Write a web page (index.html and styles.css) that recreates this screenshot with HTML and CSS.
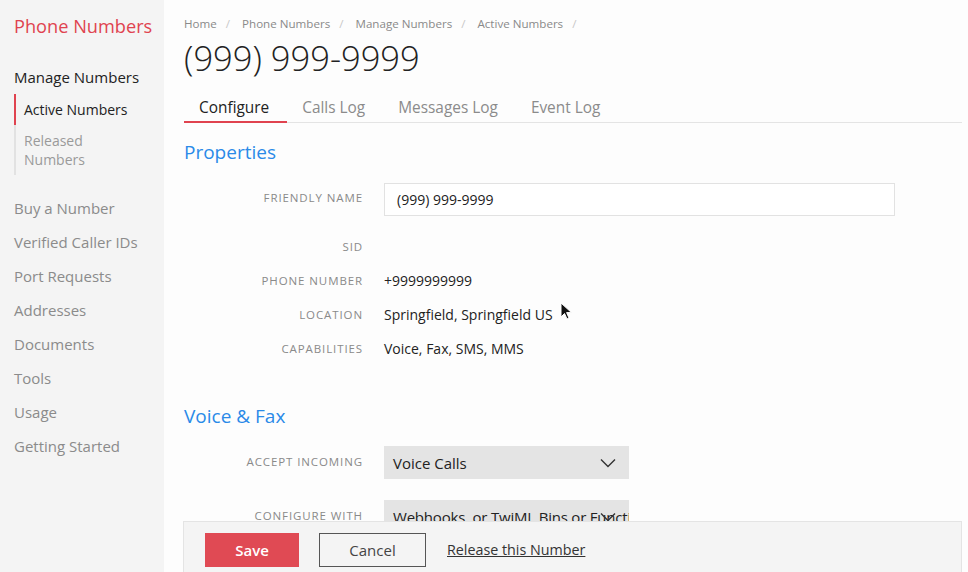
FILE: index.html
```html
<!DOCTYPE html>
<html lang="en">
<head>
  <meta charset="UTF-8">
  <title>Phone Numbers - Configure</title>
  <link rel="stylesheet" href="styles.css">
</head>
<body>
<div class="layout">
  <nav class="sidebar">
    <h1 class="brand">Phone Numbers</h1>
    <div class="nav-group">Manage Numbers</div>
    <ul class="subnav">
      <li class="active">Active Numbers</li>
      <li>Released Numbers</li>
    </ul>
    <ul class="nav">
      <li>Buy a Number</li>
      <li>Verified Caller IDs</li>
      <li>Port Requests</li>
      <li>Addresses</li>
      <li>Documents</li>
      <li>Tools</li>
      <li>Usage</li>
      <li>Getting Started</li>
    </ul>
  </nav>

  <main class="main">
    <div class="crumbs">
      <span>Home</span><span class="sep">/</span>
      <span>Phone Numbers</span><span class="sep">/</span>
      <span>Manage Numbers</span><span class="sep">/</span>
      <span>Active Numbers</span><span class="sep">/</span>
    </div>
    <h2 class="title">(999) 999-9999</h2>

    <div class="tabs">
      <span class="tab active">Configure</span>
      <span class="tab">Calls Log</span>
      <span class="tab">Messages Log</span>
      <span class="tab">Event Log</span>
    </div>

    <h3 class="section">Properties</h3>
    <div class="row input-row">
      <label class="label" for="friendly">Friendly Name</label>
      <input class="text-input" id="friendly" type="text" value="(999) 999-9999">
    </div>
    <div class="row">
      <span class="label">SID</span>
      <span class="value"></span>
    </div>
    <div class="row">
      <span class="label">Phone Number</span>
      <span class="value">+9999999999</span>
    </div>
    <div class="row">
      <span class="label">Location</span>
      <span class="value">Springfield, Springfield US</span>
    </div>
    <div class="row">
      <span class="label">Capabilities</span>
      <span class="value">Voice, Fax, SMS, MMS</span>
    </div>

    <h3 class="section voice">Voice &amp; Fax</h3>
    <div class="row select-row">
      <span class="label">Accept Incoming</span>
      <div class="select">
        <span class="select-text">Voice Calls</span>
        <svg class="chevron" width="16" height="10" viewBox="0 0 16 10"><path d="M1 1.5 L8 8.5 L15 1.5" fill="none" stroke="#333" stroke-width="1.4"/></svg>
      </div>
    </div>
    <div class="row select-row">
      <span class="label">Configure With</span>
      <div class="select">
        <span class="select-text narrow">Webhooks, or TwiML Bins or Functions</span>
        <svg class="chevron" width="16" height="10" viewBox="0 0 16 10"><path d="M1 1.5 L8 8.5 L15 1.5" fill="none" stroke="#333" stroke-width="1.4"/></svg>
      </div>
    </div>
  </main>
</div>

<!-- mouse pointer -->
<svg class="cursor" width="13" height="19" viewBox="0 0 13 19">
  <path d="M1 1 L1 15 L4.5 11.5 L7 17 L9 16 L6.6 10.6 L11.5 10.6 Z" fill="#111" stroke="#fff" stroke-width="1"/>
</svg>

<div class="footer">
  <button class="btn btn-save">Save</button>
  <button class="btn btn-cancel">Cancel</button>
  <a class="release" href="#">Release this Number</a>
</div>
</body>
</html>
```

FILE: styles.css
```css
* {
  margin: 0;
  padding: 0;
  box-sizing: border-box;
}

body {
  font-family: "Open Sans", "Noto Sans", sans-serif;
  color: #222;
  background: #fdfdfd;
  height: 572px;
  overflow: hidden;
}

.layout {
  display: flex;
  height: 572px;
}

/* left navigation */
.sidebar {
  width: 164px;
  flex: none;
  background: #f4f4f4;
  padding: 12px 0 0 14px;
}

.brand {
  font-size: 18.2px;
  font-weight: 400;
  color: #e0434f;
  line-height: 28px;
}

.nav-group {
  margin-top: 26px;
  font-size: 15px;
  line-height: 22px;
  color: #222;
}

.subnav {
  list-style: none;
  margin-top: 6px;
  border-left: 2px solid #e2e2e2;
}

.subnav li {
  font-size: 14px;
  line-height: 19px;
  color: #9a9a9a;
  padding: 6px 20px 6px 8px;
  margin-left: -2px;
  border-left: 2px solid transparent;
}

.subnav li.active {
  color: #222;
  border-left-color: #e0434f;
}

.nav {
  list-style: none;
  margin-top: 16px;
}

.nav li {
  font-size: 15px;
  line-height: 34px;
  color: #8b8b8b;
}

/* main column */
.main {
  flex: 1;
  padding: 15px 6px 0 20px;
}

.crumbs {
  font-size: 11.6px;
  line-height: 18px;
  color: #8a8a8a;
}

.crumbs .sep {
  color: #c8c8c8;
  margin: 0 9px;
}

.title {
  font-size: 34.5px;
  font-weight: 300;
  line-height: 40px;
  margin-top: 5px;
  color: #222;
}

.tabs {
  display: flex;
  margin-top: 10px;
  border-bottom: 1px solid #e4e4e4;
}

.tab {
  font-size: 15.4px;
  line-height: 20px;
  color: #8b8b8b;
  padding: 10px 18px 3px 15px;
}

.tab.active {
  color: #222;
  border-bottom: 2px solid #e0434f;
  margin-bottom: -1px;
}

.section {
  font-size: 19px;
  font-weight: 400;
  color: #2a8ae8;
  line-height: 26px;
  margin-top: 16px;
}

.section.voice {
  margin-top: 38px;
}

.row {
  display: flex;
  align-items: center;
  height: 34px;
}

.input-row {
  height: 33px;
  margin-top: 18px;
  margin-bottom: 13px;
}

.label {
  width: 179px;
  text-align: right;
  font-size: 11.5px;
  letter-spacing: 0.9px;
  text-transform: uppercase;
  color: #8a8a8a;
  margin-right: 21px;
  flex: none;
}

.input-row .label {
  margin-top: -4px;
}

.value {
  font-size: 14px;
  color: #222;
}

.text-input {
  width: 511px;
  height: 33px;
  border: 1px solid #e2e2e2;
  background: #fff;
  font-family: inherit;
  font-size: 14px;
  color: #222;
  padding: 0 12px;
  outline: none;
}

.select-row {
  height: 33px;
  margin-bottom: 21px;
}

.voice + .select-row {
  margin-top: 17px;
}

.select-row .label {
  margin-top: -3px;
}

.select {
  position: relative;
  width: 245px;
  height: 33px;
  background: #e4e4e4;
  overflow: hidden;
  display: flex;
  align-items: center;
  padding-left: 9px;
}

.select-text {
  font-size: 15px;
  color: #222;
  white-space: nowrap;
}

.select-text.narrow {
  letter-spacing: -0.2px;
}

.chevron {
  position: absolute;
  right: 13px;
  top: 12px;
}

.cursor {
  position: absolute;
  left: 560px;
  top: 302px;
}

/* action bar pinned to the bottom */
.footer {
  position: fixed;
  left: 183px;
  right: 6px;
  top: 521px;
  height: 60px;
  background: #f4f4f4;
  border: 1px solid #e4e4e4;
  display: flex;
  align-items: flex-start;
  padding: 11px 0 0 21px;
}

.btn {
  font-family: inherit;
  font-size: 15px;
  height: 34px;
  cursor: pointer;
}

.btn-save {
  width: 94px;
  background: #e04a54;
  color: #fff;
  font-weight: 600;
  border: none;
}

.btn-cancel {
  width: 107px;
  margin-left: 20px;
  background: #f4f4f4;
  color: #444;
  border: 1px solid #555;
}

.release {
  margin-left: 21px;
  font-size: 14.3px;
  line-height: 34px;
  color: #333;
}
```
